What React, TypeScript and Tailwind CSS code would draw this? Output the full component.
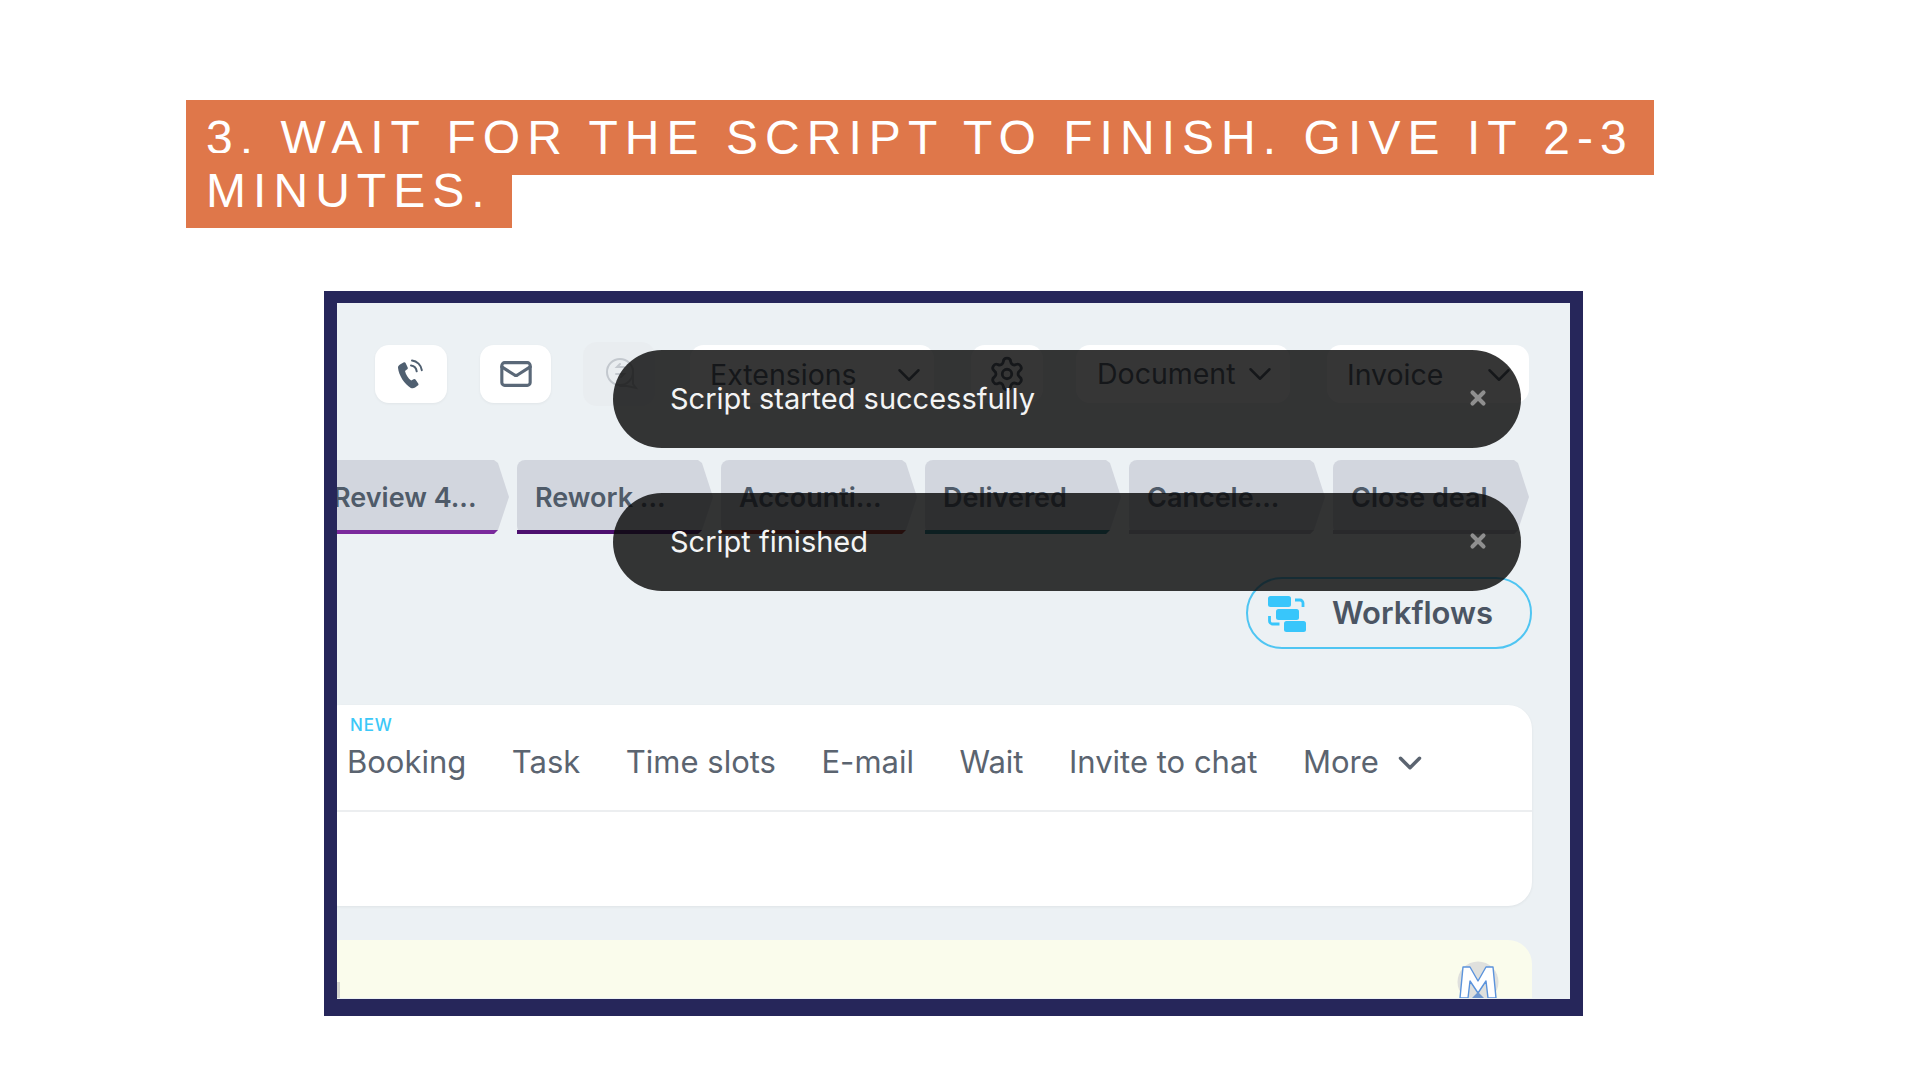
import { ChevronDown, Mail, Settings, X } from 'lucide-react'

const stages = [
  { label: 'Review 4...', line: 'bg-[#7a2a9c]', textClass: 'pl-[20px]' },
  { label: 'Rework ...', line: 'bg-[#4c0f6e]', textClass: 'pl-[18px]' },
  { label: 'Accounti...', line: 'bg-[#a02a20]', textClass: 'pl-[18px]' },
  { label: 'Delivered', line: 'bg-[#1f7f8c]', textClass: 'pl-[18px]' },
  { label: 'Cancele...', line: 'bg-[#b4b8c0]', textClass: 'pl-[18px]' },
  { label: 'Close deal', line: 'bg-[#b4b8c0]', textClass: 'pl-[18px]' },
]

const tabs = ['Task', 'Time slots', 'E-mail', 'Wait', 'Invite to chat']

function PhoneIcon() {
  return (
    <svg width="30" height="32" viewBox="0 0 30 32" fill="none" className="text-[#4f5f70]">
      <path
        d="M4 6.5 7.5 4.5c1-.5 1.8-.2 2.2.7l2 4.2c.3.8.1 1.4-.5 1.9L9 13c.8 3.6 3.2 7.4 6.2 9.6l2.4-1.4c.7-.4 1.4-.3 1.9.4l2.7 3.8c.5.8.4 1.6-.4 2.2l-2.7 2c-1.3.9-2.9 1-4.3.3C8.6 26.500 2.800 17.500 2 9.800 1.900 8.500 2.700 7.200 4 6.500Z"
        fill="currentColor"
      />
      <path d="M15 7.500c3 .4 5.300 2.800 5.700 5.800" stroke="currentColor" strokeWidth="2" strokeLinecap="round" />
      <path d="M16 2.500c5 .5 9.200 4.600 9.800 9.700" stroke="currentColor" strokeWidth="2" strokeLinecap="round" />
    </svg>
  )
}

function ChatMoneyIcon() {
  return (
    <svg width="34" height="34" viewBox="0 0 34 34" fill="none" className="text-[#c3c8ce]">
      <circle cx="15" cy="15" r="13" stroke="currentColor" strokeWidth="2" />
      <path d="M19 10h-7l3-3M11 17h8l-3 3" stroke="currentColor" strokeWidth="2" strokeLinecap="round" />
      <path d="M28 12v15l3 4-9-2h-7" stroke="currentColor" strokeWidth="2" strokeLinecap="round" />
    </svg>
  )
}

function WorkflowsIcon() {
  return (
    <svg width="38" height="36" viewBox="0 0 38 36" fill="#38c6fb">
      <rect x="0" y="0" width="23" height="11" rx="2.500" />
      <rect x="8" y="13" width="23" height="11" rx="2.500" />
      <rect x="16" y="25" width="22" height="11" rx="2.500" />
      <path d="M27 4h5a3 3 0 0 1 3 3v4M1.500 20v5a3 3 0 0 0 3 3h7" fill="none" stroke="#38c6fb" strokeWidth="2.800" />
    </svg>
  )
}

function MLogo() {
  return (
    <svg width="42" height="37" viewBox="0 0 42 37" fill="none">
      <circle cx="21" cy="21" r="20.500" fill="#dfe0dd" />
      <path
        d="M3 37 6 6h7l8 14 8-14h7l3 31h-8l-2-17-8 12-8-12-2 17Z"
        fill="#ffffff"
        stroke="#5b93dc"
        strokeWidth="1.400"
        strokeLinejoin="round"
      />
      <path d="M15 37l6-6 6 6Z" fill="#6f97d0" />
    </svg>
  )
}

function Toast({ text }: { text: string }) {
  return (
    <div className="flex h-[98px] items-center justify-between rounded-full bg-[rgba(10,10,10,0.82)] pl-[57px] pr-[32px]">
      <span className="text-[29px] text-[#f4f4f4]">{text}</span>
      <X size={22} strokeWidth={4.5} className="mb-[2px] text-[#8f8f8f]" />
    </div>
  )
}

export default function App() {
  return (
    <div className="h-[1080px] w-[1920px] overflow-hidden bg-white pt-[111px] font-['Inter',sans-serif]">
      <h2 className="ml-[186px] w-[1480px] font-['Liberation_Sans',sans-serif] text-[48px] leading-[53px] tracking-[7.05px] text-white">
        <span className="bg-[#df774a] box-decoration-clone px-[20px] py-[11px]">
          3. WAIT FOR THE SCRIPT TO FINISH. GIVE IT 2-3 MINUTES.
        </span>
      </h2>

      <div className="relative ml-[324px] mt-[74px] h-[725px] w-[1259px] overflow-hidden border-x-[13px] border-b-[17px] border-t-[12px] border-[#26265a] bg-[#ecf1f4]">
        {/* barra de ações */}
        <div className="mt-[42px] flex h-[58px] items-center pl-[38px] text-[28.5px] text-[#4b5563]">
          <div className="flex h-[58px] w-[72px] items-center justify-center rounded-[14px] bg-white shadow-[0_1px_3px_rgba(0,0,0,0.05)]">
            <PhoneIcon />
          </div>
          <div className="ml-[33px] flex h-[58px] w-[71px] items-center justify-center rounded-[14px] bg-white shadow-[0_1px_3px_rgba(0,0,0,0.05)]">
            <Mail size={34} strokeWidth={2.2} className="text-[#5a6878]" />
          </div>
          <div className="ml-[32px] flex h-[64px] w-[72px] items-center justify-center rounded-[14px] bg-[#e9edf0] pl-[6px]">
            <ChatMoneyIcon />
          </div>
          <div className="ml-[35px] flex h-[58px] w-[244px] items-center rounded-[14px] bg-white pl-[20px] pt-[2px]">
            <span className="w-[174px]">Extensions</span>
            <ChevronDown size={38} strokeWidth={1.6} className="ml-[6px]" />
          </div>
          <div className="ml-[37px] flex h-[58px] w-[72px] items-center justify-center rounded-[14px] bg-white">
            <Settings size={38} strokeWidth={1.8} />
          </div>
          <div className="ml-[33px] flex h-[58px] w-[214px] items-center rounded-[14px] bg-white pl-[21px]">
            <span>Document</span>
            <ChevronDown size={38} strokeWidth={1.6} className="ml-[5px]" />
          </div>
          <div className="ml-[37px] flex h-[58px] w-[202px] items-center rounded-[14px] bg-white pl-[20px] pt-[2px]">
            <span className="w-[120px]">Invoice</span>
            <ChevronDown size={38} strokeWidth={1.6} className="ml-[13px]" />
          </div>
        </div>

        {/* etapas */}
        <div className="ml-[-24px] mt-[57px] flex h-[74px] gap-[8px]">
          {stages.map((stage) => (
            <div
              key={stage.label}
              className="relative flex h-[74px] w-[196px] shrink-0 items-center rounded-l-[8px] bg-[#d2d6de] pt-[2px] [clip-path:polygon(0_0,181px_0,185px_3px,196px_37px,185px_70px,181px_74px,0_74px)]"
            >
              <span className={`${stage.textClass} text-[27px] font-semibold text-[#4f5b69]`}>{stage.label}</span>
              <div className={`absolute inset-x-0 bottom-0 h-[4px] ${stage.line}`} />
            </div>
          ))}
        </div>

        <div className="mt-[43px] flex justify-end pr-[38px]">
          <div className="flex h-[72px] w-[286px] items-center rounded-full border-2 border-[#4fc5f2] pl-[20px] pt-[1px]">
            <WorkflowsIcon />
            <span className="ml-[26px] text-[31px] font-semibold text-[#4b5563]">Workflows</span>
          </div>
        </div>

        {/* card de atividades */}
        <div className="ml-[-20px] mr-[38px] mt-[56px] h-[201px] rounded-[24px] bg-white shadow-[0_1px_3px_rgba(0,0,0,0.06)]">
          <div className="flex h-[107px] items-center gap-[45.5px] border-b-2 border-[#eceef0] pl-[30px] pt-[10px] text-[31px] text-[#5b6470]">
            <div className="relative">
              <span className="absolute left-[3px] top-[-24px] text-[17px] font-medium leading-[20px] tracking-[0.05em] text-[#3cc8f8]">NEW</span>
              Booking
            </div>
            {tabs.map((tab) => (
              <span key={tab}>{tab}</span>
            ))}
            <div className="flex items-center gap-[12px]">
              <span>More</span>
              <ChevronDown size={38} strokeWidth={2.2} />
            </div>
          </div>
        </div>

        <div className="relative ml-[-20px] mr-[38px] mt-[34px] h-[58px] rounded-t-[24px] bg-[#fafcec]">
          <div className="absolute bottom-0 left-[20px] h-[16px] w-[3px] bg-[#d5d6d0]" />
          <div className="absolute bottom-0 right-[33px]">
            <MLogo />
          </div>
        </div>

        {/* toasts */}
        <div className="absolute left-[276px] top-[47px] flex w-[908px] flex-col gap-[45px]">
          <Toast text="Script started successfully" />
          <Toast text="Script finished" />
        </div>
      </div>
    </div>
  )
}
